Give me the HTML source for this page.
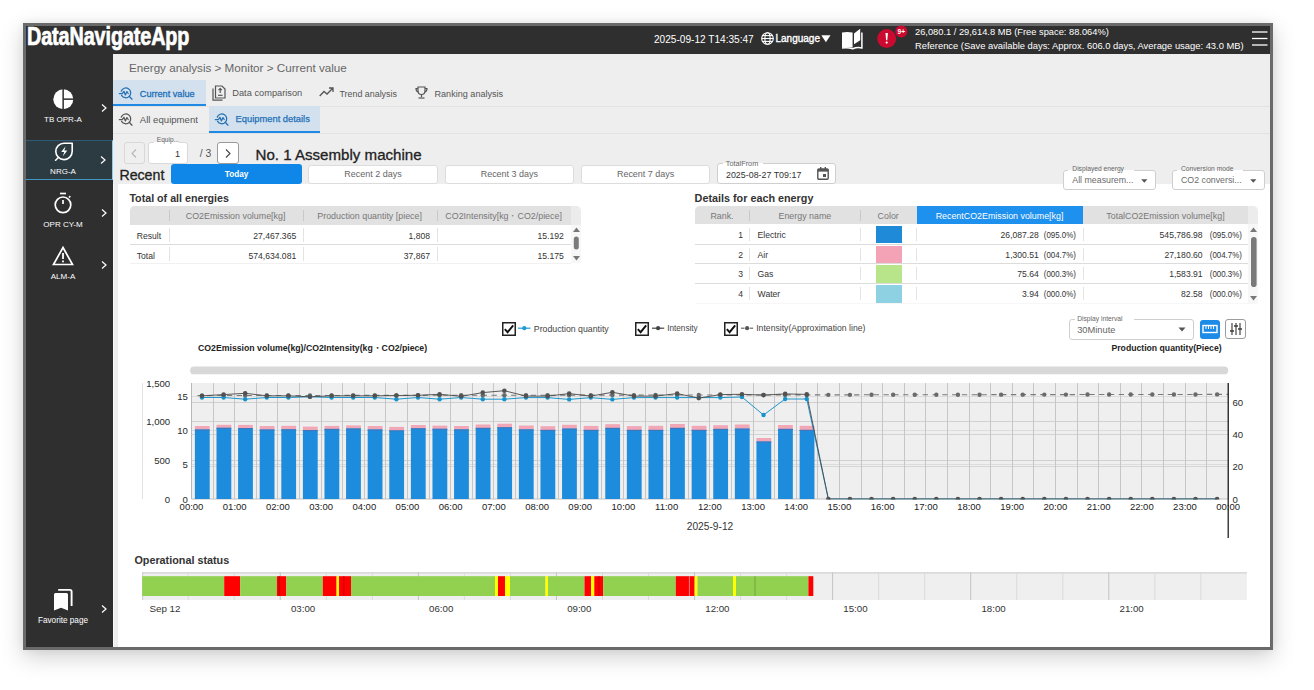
<!DOCTYPE html><html><head><meta charset="utf-8"><style>
html,body{margin:0;padding:0;}
body{width:1314px;height:690px;overflow:hidden;background:#fff;position:relative;font-family:"Liberation Sans", sans-serif;}
.t{position:absolute;white-space:nowrap;line-height:1.15;}
svg{position:absolute;overflow:visible;}
</style></head><body>
<div style="position:absolute;left:23px;top:23px;width:1250px;height:626.5px;box-sizing:border-box;border:3px solid #6a6a6a;box-shadow:0 7px 22px rgba(0,0,0,0.19), 0 0 8px rgba(0,0,0,0.06);background:#2f2f2f;"></div>
<div style="position:absolute;left:26px;top:26px;width:1244px;height:27.5px;background:#2f2f2f;"></div>
<div style="position:absolute;left:26px;top:53px;width:87px;height:593.5px;background:#2f2f2f;"></div>
<div style="position:absolute;left:113px;top:53.5px;width:1157px;height:593px;background:#eeeeee;"></div>
<div style="position:absolute;left:113px;top:184px;width:1px;height:462.5px;background:#fafafa;"></div>
<div style="position:absolute;left:118px;top:184px;width:1152px;height:462.5px;background:#fff;"></div>
<div class="t" style="left:26.6px;top:22.1px;font-size:25px;font-weight:bold;color:#fff;transform:scaleX(0.79);transform-origin:0 0;letter-spacing:-0.1px;-webkit-text-stroke:0.7px #fff;">DataNavigateApp</div>
<div class="t" style="left:654px;top:33.86px;font-size:10.1px;color:#fff;font-weight:normal;">2025-09-12 T14:35:47</div>
<svg style="left:761px;top:32px" width="13" height="13" viewBox="0 0 13 13"><g fill="none" stroke="#fff" stroke-width="1.1"><circle cx="6.5" cy="6.5" r="5.8"/><ellipse cx="6.5" cy="6.5" rx="2.6" ry="5.8"/><line x1="0.7" y1="6.5" x2="12.3" y2="6.5"/><line x1="1.5" y1="3.6" x2="11.5" y2="3.6"/><line x1="1.5" y1="9.4" x2="11.5" y2="9.4"/></g></svg>
<div class="t" style="left:775.5px;top:33.25px;font-size:10px;color:#fff;font-weight:normal;transform:scaleX(1.0);transform-origin:0 0;-webkit-text-stroke:0.35px #fff;">Language</div>
<svg style="left:820.6px;top:34.8px" width="10" height="8" viewBox="0 0 10 8"><path d="M0.3 0.3 L9.5 0.3 L4.9 7.3 Z" fill="#fff"/></svg>
<svg style="left:841px;top:28px" width="23" height="22" viewBox="0 0 23 22"><path d="M1 4.6 Q6.2 3.4 11.6 4.6 L11.6 19.6 Q6.2 18.6 1 19.8 Z" fill="#fff"/><path d="M13 5.6 L19.2 0.7 L19.2 12.3 L13 16.3 Z" fill="#fff"/><path d="M20.9 4.6 L20.9 19.9 Q16 18.9 11.8 20.7 Q6.5 19.1 1 20" fill="none" stroke="#fff" stroke-width="1.5"/></svg>
<svg style="left:876px;top:26px" width="32" height="24" viewBox="0 0 32 24"><circle cx="10.7" cy="12.6" r="9.5" fill="#cc0a2f"/><path d="M9.5 7 L11.9 7 L11.3 14.2 L10.1 14.2 Z" fill="#fff"/><circle cx="10.7" cy="16.6" r="1.1" fill="#fff"/><circle cx="25.3" cy="5.4" r="6" fill="#cc0a2f"/><text x="25.3" y="8.2" font-size="6.6" font-weight="bold" fill="#fff" text-anchor="middle" font-family="Liberation Sans">9+</text></svg>
<div class="t" style="left:915px;top:26.98px;font-size:9.3px;color:#fff;font-weight:normal;">26,080.1 / 29,614.8 MB (Free space: 88.064%)</div>
<div class="t" style="left:915px;top:41.09px;font-size:9.4px;color:#fff;font-weight:normal;">Reference (Save available days: Approx. 606.0 days, Average usage: 43.0 MB)</div>
<svg style="left:1252px;top:30px" width="16" height="16" viewBox="0 0 16 16"><g stroke="#fff" stroke-width="1.3"><line x1="0" y1="2" x2="15.5" y2="2"/><line x1="0" y1="8.5" x2="15.5" y2="8.5"/><line x1="0" y1="15" x2="15.5" y2="15"/></g></svg>
<div style="position:absolute;left:26px;top:140px;width:87px;height:40px;background:#2c3a42;box-sizing:border-box;border-top:1px solid #2d5a75;border-bottom:1.5px solid #4596c8;border-right:1px solid #8fcbea;"></div>
<svg style="left:53px;top:88.5px" width="21" height="21" viewBox="0 0 21 21"><circle cx="10.3" cy="10.2" r="10" fill="#fff"/><rect x="9.4" y="0" width="1.5" height="21" fill="#2f2f2f"/><rect x="10" y="9.4" width="11" height="1.5" fill="#2f2f2f"/></svg>
<div class="t" style="left:-437px;width:1000px;text-align:center;top:115.06px;font-size:8px;color:#fff;font-weight:normal;">TB OPR-A</div>
<svg style="left:100.5px;top:104px" width="6" height="8" viewBox="0 0 6 8"><path d="M1 0.5 L5 4 L1 7.5" fill="none" stroke="#fff" stroke-width="1.2"/></svg>
<svg style="left:53.5px;top:142px" width="20" height="20" viewBox="0 0 20 20"><path d="M18.2 1.2 L18.2 9.3 A8.2 8.2 0 1 1 10 1.2 Z" fill="none" stroke="#fff" stroke-width="1.6" stroke-linejoin="round"/><line x1="4.6" y1="15.2" x2="1.6" y2="18.2" stroke="#fff" stroke-width="1.6" stroke-linecap="round"/><path d="M11.6 4.3 L7.2 10.1 L10.2 10.1 L8.9 14.3 L13.3 8.5 L10.3 8.5 Z" fill="#fff"/></svg>
<div class="t" style="left:-437px;width:1000px;text-align:center;top:167.46px;font-size:8px;color:#fff;font-weight:normal;">NRG-A</div>
<svg style="left:100.2px;top:156.2px" width="6" height="8" viewBox="0 0 6 8"><path d="M1 0.5 L5 4 L1 7.5" fill="none" stroke="#fff" stroke-width="1.2"/></svg>
<svg style="left:53px;top:192px" width="20" height="22" viewBox="0 0 20 22"><g fill="none" stroke="#fff" stroke-width="1.7"><circle cx="10" cy="12.8" r="7.8"/><line x1="7" y1="1.5" x2="13" y2="1.5"/><line x1="10" y1="8" x2="10" y2="12"/><line x1="16" y1="5.5" x2="17.3" y2="4.2"/></g></svg>
<div class="t" style="left:-437px;width:1000px;text-align:center;top:219.66px;font-size:8px;color:#fff;font-weight:normal;">OPR CY-M</div>
<svg style="left:100.5px;top:208.5px" width="6" height="8" viewBox="0 0 6 8"><path d="M1 0.5 L5 4 L1 7.5" fill="none" stroke="#fff" stroke-width="1.2"/></svg>
<svg style="left:52px;top:246px" width="22" height="20" viewBox="0 0 22 20"><path d="M11 1.5 L20.5 18.5 L1.5 18.5 Z" fill="none" stroke="#fff" stroke-width="1.7" stroke-linejoin="miter"/><rect x="10.1" y="7" width="1.8" height="6" fill="#fff"/><rect x="10.1" y="14.5" width="1.8" height="1.8" fill="#fff"/></svg>
<div class="t" style="left:-437px;width:1000px;text-align:center;top:272.16px;font-size:8px;color:#fff;font-weight:normal;">ALM-A</div>
<svg style="left:100.5px;top:261px" width="6" height="8" viewBox="0 0 6 8"><path d="M1 0.5 L5 4 L1 7.5" fill="none" stroke="#fff" stroke-width="1.2"/></svg>
<svg style="left:53px;top:588px" width="20" height="24" viewBox="0 0 20 24"><path d="M5.2 1.9 L16.8 1.9 Q18.6 1.9 18.6 3.7 L18.6 18" fill="none" stroke="#fff" stroke-width="1.9"/><path d="M1 6.5 Q1 5 2.5 5 L13.5 5 Q15 5 15 6.5 L15 22.4 L8 19.8 L1 22.4 Z" fill="#fff"/></svg>
<div class="t" style="left:-437px;width:1000px;text-align:center;top:615.58px;font-size:8.2px;color:#fff;font-weight:normal;">Favorite page</div>
<svg style="left:100.5px;top:605px" width="6" height="8" viewBox="0 0 6 8"><path d="M1 0.5 L5 4 L1 7.5" fill="none" stroke="#fff" stroke-width="1.2"/></svg>
<div class="t" style="left:129.4px;top:62.23px;font-size:10.8px;color:#666;font-weight:normal;transform:scaleX(1.08);transform-origin:0 0;">Energy analysis &gt; Monitor &gt; Current value</div>
<div style="position:absolute;left:113px;top:106px;width:1157px;height:1px;background:#e2e2e2;"></div>
<div style="position:absolute;left:113px;top:133px;width:1157px;height:1px;background:#e2e2e2;"></div>
<div style="position:absolute;left:113px;top:80px;width:93px;height:24px;background:#d3e1ef;"></div>
<div style="position:absolute;left:113px;top:104px;width:93px;height:2px;background:#1f8ae3;"></div>
<div style="position:absolute;left:209px;top:106px;width:111px;height:25px;background:#d3e1ef;"></div>
<div style="position:absolute;left:209px;top:131px;width:111px;height:2px;background:#1f8ae3;"></div>
<svg style="left:118px;top:85.5px" width="16" height="15" viewBox="0 0 16 15"><g fill="none" stroke="#2470b2" stroke-width="1.25" stroke-linecap="round" stroke-linejoin="round"><path d="M3.2 5.2 A4.9 4.9 0 1 1 3.6 9.4"/><line x1="11.2" y1="10.3" x2="14" y2="13.2"/><path d="M1.3 7.6 L4.3 7.6 L5.9 5.3 L7.4 8.9 L8.9 5.6 L10.2 7.5"/></g></svg>
<div class="t" style="left:139.8px;top:88.54px;font-size:9.13px;color:#2270b8;font-weight:normal;-webkit-text-stroke:0.3px #2270b8;">Current value</div>
<svg style="left:212px;top:85px" width="14" height="16" viewBox="0 0 14 16"><g fill="none" stroke="#555" stroke-width="1.2"><path d="M3.5 1 L10 1 L13 4 L13 13 L3.5 13 Z"/><path d="M1 3.5 L1 15.2 L10.5 15.2"/><line x1="8.2" y1="3.5" x2="8.2" y2="8"/><path d="M6.5 5.2 L8.2 3.5 L9.9 5.2"/><line x1="6" y1="10.3" x2="10.5" y2="10.3"/></g></svg>
<div class="t" style="left:232.3px;top:88.42px;font-size:9.26px;color:#555;font-weight:normal;">Data comparison</div>
<svg style="left:319px;top:87px" width="15" height="10" viewBox="0 0 15 10"><path d="M0.7 9 L5 4.5 L8 7 L13.5 1.5 M10 1 L14 1 L14 5" fill="none" stroke="#555" stroke-width="1.3"/></svg>
<div class="t" style="left:339.5px;top:88.75px;font-size:8.89px;color:#555;font-weight:normal;">Trend analysis</div>
<svg style="left:415px;top:86px" width="13" height="13" viewBox="0 0 13 13"><g fill="none" stroke="#555" stroke-width="1.2"><path d="M3 1 L10 1 L10 5 A3.5 3.5 0 0 1 3 5 Z"/><path d="M3 2.5 L1 2.5 Q1 5.5 3.3 6"/><path d="M10 2.5 L12 2.5 Q12 5.5 9.7 6"/><line x1="6.5" y1="8.5" x2="6.5" y2="11"/><line x1="3.5" y1="12" x2="9.5" y2="12"/></g></svg>
<div class="t" style="left:434.5px;top:88.57px;font-size:9.09px;color:#555;font-weight:normal;">Ranking analysis</div>
<svg style="left:118px;top:111.5px" width="16" height="15" viewBox="0 0 16 15"><g fill="none" stroke="#555" stroke-width="1.25" stroke-linecap="round" stroke-linejoin="round"><path d="M3.2 5.2 A4.9 4.9 0 1 1 3.6 9.4"/><line x1="11.2" y1="10.3" x2="14" y2="13.2"/><path d="M1.3 7.6 L4.3 7.6 L5.9 5.3 L7.4 8.9 L8.9 5.6 L10.2 7.5"/></g></svg>
<div class="t" style="left:139.8px;top:114.00px;font-size:9.61px;color:#555;font-weight:normal;">All equipment</div>
<svg style="left:214px;top:111.5px" width="16" height="15" viewBox="0 0 16 15"><g fill="none" stroke="#2470b2" stroke-width="1.25" stroke-linecap="round" stroke-linejoin="round"><path d="M3.2 5.2 A4.9 4.9 0 1 1 3.6 9.4"/><line x1="11.2" y1="10.3" x2="14" y2="13.2"/><path d="M1.3 7.6 L4.3 7.6 L5.9 5.3 L7.4 8.9 L8.9 5.6 L10.2 7.5"/></g></svg>
<div class="t" style="left:235.6px;top:114.23px;font-size:9.36px;color:#2270b8;font-weight:normal;-webkit-text-stroke:0.25px #2270b8;">Equipment details</div>
<div style="position:absolute;left:123.7px;top:142.3px;width:21px;height:21.4px;box-sizing:border-box;background:#efefef;border:1px solid #d8d8d8;border-radius:3px;"></div>
<svg style="left:131px;top:148.5px" width="6" height="9" viewBox="0 0 6 9"><path d="M5 0.5 L1 4.5 L5 8.5" fill="none" stroke="#b5b5b5" stroke-width="1.1"/></svg>
<div style="position:absolute;left:147.7px;top:142.3px;width:40.6px;height:21.4px;box-sizing:border-box;background:#fff;border:1px solid #d9d9d9;border-radius:3px;"></div>
<div style="position:absolute;left:154px;top:139px;width:25px;height:5px;background:#eeeeee;"></div>
<div style="position:absolute;left:154px;top:142px;width:25px;height:2px;background:#fff;"></div>
<div class="t" style="left:156.8px;top:136.03px;font-size:6.6px;color:#666;font-weight:normal;">Equip...</div>
<div class="t" style="right:1134px;top:148.67px;font-size:9.2px;color:#333;font-weight:normal;">1</div>
<div class="t" style="left:199.8px;top:147.89px;font-size:10.4px;color:#555;font-weight:normal;">/ 3</div>
<div style="position:absolute;left:217.4px;top:142.3px;width:21.2px;height:21.4px;box-sizing:border-box;background:#fff;border:1px solid #9a9a9a;border-radius:3px;"></div>
<svg style="left:225px;top:148.5px" width="6" height="9" viewBox="0 0 6 9"><path d="M1 0.5 L5 4.5 L1 8.5" fill="none" stroke="#444" stroke-width="1.1"/></svg>
<div class="t" style="left:255.5px;top:146.03px;font-size:15.1px;color:#222;font-weight:normal;-webkit-text-stroke:0.3px #222;">No. 1 Assembly machine</div>
<div class="t" style="left:119.4px;top:166.65px;font-size:14.2px;color:#222;font-weight:normal;-webkit-text-stroke:0.3px #222;">Recent</div>
<div style="position:absolute;left:171.1px;top:163.7px;width:130.9px;height:20.3px;background:#0f87e8;border-radius:3px;"></div>
<div class="t" style="left:-263.4px;width:1000px;text-align:center;top:170.08px;font-size:8.2px;color:#fff;font-weight:bold;">Today</div>
<div style="position:absolute;left:308.2px;top:164.5px;width:129.5px;height:19.1px;box-sizing:border-box;background:#fff;border:1px solid #dcdcdc;border-radius:3px;"></div>
<div class="t" style="left:-127.05000000000001px;width:1000px;text-align:center;top:169.18px;font-size:8.97px;color:#666;font-weight:normal;">Recent 2 days</div>
<div style="position:absolute;left:444.7px;top:164.5px;width:129.3px;height:19.1px;box-sizing:border-box;background:#fff;border:1px solid #dcdcdc;border-radius:3px;"></div>
<div class="t" style="left:9.350000000000023px;width:1000px;text-align:center;top:169.18px;font-size:8.97px;color:#666;font-weight:normal;">Recent 3 days</div>
<div style="position:absolute;left:580.8px;top:164.5px;width:129.60000000000002px;height:19.1px;box-sizing:border-box;background:#fff;border:1px solid #dcdcdc;border-radius:3px;"></div>
<div class="t" style="left:145.5999999999999px;width:1000px;text-align:center;top:169.18px;font-size:8.97px;color:#666;font-weight:normal;">Recent 7 days</div>
<div style="position:absolute;left:716.7px;top:163.4px;width:119.7px;height:20.8px;box-sizing:border-box;background:#fff;border:1px solid #cfcfcf;border-radius:3px;"></div>
<div style="position:absolute;left:723px;top:160px;width:40px;height:5px;background:#eeeeee;"></div>
<div style="position:absolute;left:723px;top:163.4px;width:40px;height:1.5px;background:#fff;"></div>
<div class="t" style="left:725.8px;top:160.19px;font-size:7.3px;color:#666;font-weight:normal;">TotalFrom</div>
<div class="t" style="left:726px;top:170.16px;font-size:8.88px;color:#333;font-weight:normal;">2025-08-27 T09:17</div>
<svg style="left:817px;top:167px" width="12" height="13" viewBox="0 0 12 13"><rect x="0.8" y="2" width="10.4" height="10.2" rx="1" fill="none" stroke="#555" stroke-width="1.4"/><rect x="0.8" y="2" width="10.4" height="2.6" fill="#555"/><rect x="3" y="0" width="1.4" height="3" fill="#555"/><rect x="7.6" y="0" width="1.4" height="3" fill="#555"/><rect x="6" y="7" width="3" height="3" fill="#555"/></svg>
<div style="position:absolute;left:1063.3px;top:169.6px;width:92.40000000000009px;height:20.900000000000006px;box-sizing:border-box;background:#fff;border:1px solid #cfcfcf;border-radius:3px;"></div>
<div style="position:absolute;left:1068.3px;top:165.6px;width:66px;height:5px;background:#eeeeee;"></div>
<div style="position:absolute;left:1068.3px;top:169.6px;width:66px;height:1.5px;background:#fff;"></div>
<div class="t" style="left:1072.3px;top:164.84px;font-size:6.7px;color:#666;font-weight:normal;">Displayed energy</div>
<div class="t" style="left:1072.3px;top:174.74px;font-size:8.8px;color:#6a6a6a;font-weight:normal;">All measurem...</div>
<svg style="left:1140.7px;top:178.55px" width="7" height="4" viewBox="0 0 7 4"><path d="M0.2 0.2 L6.4 0.2 L3.3 3.8 Z" fill="#555"/></svg>
<div style="position:absolute;left:1172px;top:169.6px;width:92.79999999999995px;height:20.900000000000006px;box-sizing:border-box;background:#fff;border:1px solid #cfcfcf;border-radius:3px;"></div>
<div style="position:absolute;left:1177px;top:165.6px;width:66px;height:5px;background:#eeeeee;"></div>
<div style="position:absolute;left:1177px;top:169.6px;width:66px;height:1.5px;background:#fff;"></div>
<div class="t" style="left:1181px;top:164.84px;font-size:6.7px;color:#666;font-weight:normal;">Conversion mode</div>
<div class="t" style="left:1181px;top:174.74px;font-size:8.8px;color:#6a6a6a;font-weight:normal;">CO2 conversi...</div>
<svg style="left:1249.8px;top:178.55px" width="7" height="4" viewBox="0 0 7 4"><path d="M0.2 0.2 L6.4 0.2 L3.3 3.8 Z" fill="#555"/></svg>
<div class="t" style="left:129.4px;top:191.62px;font-size:10.7px;color:#333;font-weight:bold;font-weight:600;">Total of all energies</div>
<div style="position:absolute;left:129.7px;top:205.9px;width:451.3px;height:57.5px;background:#f7f7f7;border-radius:5px 5px 2px 2px;"></div>
<div style="position:absolute;left:129.7px;top:205.9px;width:451.3px;height:18.9px;background:#ececec;border-radius:5px 5px 0 0;"></div>
<div style="position:absolute;left:129.7px;top:224.8px;width:441px;height:38.6px;background:#fff;"></div>
<div style="position:absolute;left:129.7px;top:205.9px;width:441px;height:18.9px;background:#e1e1e1;border-radius:5px 0 0 0;"></div>
<div style="position:absolute;left:168.5px;top:210px;width:1px;height:11px;background:#c9c9c9;"></div>
<div style="position:absolute;left:302.6px;top:210px;width:1px;height:11px;background:#c9c9c9;"></div>
<div style="position:absolute;left:436.6px;top:210px;width:1px;height:11px;background:#c9c9c9;"></div>
<div class="t" style="left:-264.45px;width:1000px;text-align:center;top:211.15px;font-size:8.9px;color:#777;font-weight:normal;">CO2Emission volume[kg]</div>
<div class="t" style="left:-130.39999999999998px;width:1000px;text-align:center;top:211.15px;font-size:8.9px;color:#777;font-weight:normal;">Production quantity [piece]</div>
<div class="t" style="left:3.650000000000034px;width:1000px;text-align:center;top:211.15px;font-size:8.9px;color:#777;font-weight:normal;">CO2Intensity[kg・CO2/piece]</div>
<div style="position:absolute;left:129.7px;top:244px;width:441px;height:1px;background:#dcdcdc;"></div>
<div style="position:absolute;left:129.7px;top:262.8px;width:441px;height:1px;background:#f1f1f1;"></div>
<div style="position:absolute;left:168.5px;top:227.5px;width:1px;height:14px;background:#e3e3e3;"></div>
<div style="position:absolute;left:302.6px;top:227.5px;width:1px;height:14px;background:#e3e3e3;"></div>
<div style="position:absolute;left:436.6px;top:227.5px;width:1px;height:14px;background:#e3e3e3;"></div>
<div style="position:absolute;left:168.5px;top:247px;width:1px;height:14px;background:#e3e3e3;"></div>
<div style="position:absolute;left:302.6px;top:247px;width:1px;height:14px;background:#e3e3e3;"></div>
<div style="position:absolute;left:436.6px;top:247px;width:1px;height:14px;background:#e3e3e3;"></div>
<div class="t" style="left:136.7px;top:232.02px;font-size:8.6px;color:#333;font-weight:normal;">Result</div>
<div class="t" style="left:136.7px;top:251.52px;font-size:8.6px;color:#333;font-weight:normal;">Total</div>
<div class="t" style="right:1017.8px;top:232.02px;font-size:8.6px;color:#333;font-weight:normal;">27,467.365</div>
<div class="t" style="right:884px;top:232.02px;font-size:8.6px;color:#333;font-weight:normal;">1,808</div>
<div class="t" style="right:750.2px;top:232.02px;font-size:8.6px;color:#333;font-weight:normal;">15.192</div>
<div class="t" style="right:1017.8px;top:251.52px;font-size:8.6px;color:#333;font-weight:normal;">574,634.081</div>
<div class="t" style="right:884px;top:251.52px;font-size:8.6px;color:#333;font-weight:normal;">37,867</div>
<div class="t" style="right:750.2px;top:251.52px;font-size:8.6px;color:#333;font-weight:normal;">15.175</div>
<svg style="left:572px;top:226px" width="9" height="36" viewBox="0 0 9 36"><path d="M4.5 1.5 L8 6 L1 6 Z" fill="#777"/><rect x="1.8" y="10.5" width="5" height="13" rx="2.5" fill="#7a7a7a"/><path d="M4.5 34.5 L8 30 L1 30 Z" fill="#777"/></svg>
<div class="t" style="left:694.6px;top:192.03px;font-size:10.8px;color:#333;font-weight:bold;font-weight:600;">Details for each energy</div>
<div style="position:absolute;left:694.6px;top:206px;width:563.9px;height:97.5px;background:#f7f7f7;border-radius:5px 5px 2px 2px;"></div>
<div style="position:absolute;left:694.6px;top:206px;width:563.9px;height:18.3px;background:#ececec;border-radius:5px 5px 0 0;"></div>
<div style="position:absolute;left:694.6px;top:224.3px;width:553.8px;height:79.2px;background:#fff;"></div>
<div style="position:absolute;left:694.6px;top:206px;width:553.8px;height:18.3px;background:#e1e1e1;border-radius:5px 0 0 0;"></div>
<div style="position:absolute;left:916.5px;top:205.5px;width:166.1px;height:18.8px;background:#1e90ee;"></div>
<div style="position:absolute;left:749.4px;top:210px;width:1px;height:11px;background:#c9c9c9;"></div>
<div style="position:absolute;left:860.4px;top:210px;width:1px;height:11px;background:#c9c9c9;"></div>
<div class="t" style="left:222.0px;width:1000px;text-align:center;top:210.95px;font-size:8.9px;color:#777;font-weight:normal;">Rank.</div>
<div class="t" style="left:304.9px;width:1000px;text-align:center;top:210.95px;font-size:8.9px;color:#777;font-weight:normal;">Energy name</div>
<div class="t" style="left:388.20000000000005px;width:1000px;text-align:center;top:210.95px;font-size:8.9px;color:#777;font-weight:normal;">Color</div>
<div class="t" style="left:499.54999999999995px;width:1000px;text-align:center;top:210.95px;font-size:8.9px;color:#fff;font-weight:normal;">RecentCO2Emission volume[kg]</div>
<div class="t" style="left:665.5px;width:1000px;text-align:center;top:210.95px;font-size:8.9px;color:#777;font-weight:normal;">TotalCO2Emission volume[kg]</div>
<div style="position:absolute;left:694.6px;top:243.5px;width:553.8px;height:1px;background:#dcdcdc;"></div>
<div style="position:absolute;left:749.4px;top:227.8px;width:1px;height:13px;background:#e3e3e3;"></div>
<div style="position:absolute;left:860.4px;top:227.8px;width:1px;height:13px;background:#e3e3e3;"></div>
<div style="position:absolute;left:916px;top:227.8px;width:1px;height:13px;background:#e3e3e3;"></div>
<div style="position:absolute;left:1082.6px;top:227.8px;width:1px;height:13px;background:#e3e3e3;"></div>
<div class="t" style="right:571px;top:230.82px;font-size:8.6px;color:#333;font-weight:normal;">1</div>
<div class="t" style="left:757.6px;top:230.82px;font-size:8.6px;color:#333;font-weight:normal;">Electric</div>
<div style="position:absolute;left:876.3px;top:225.8px;width:25.6px;height:17.7px;background:#1e8ad8;"></div>
<div class="t" style="right:275.20000000000005px;top:230.82px;font-size:8.6px;color:#333;font-weight:normal;">26,087.28</div>
<div class="t" style="right:238.20000000000005px;top:230.82px;font-size:8.6px;color:#333;font-weight:normal;transform:scaleX(0.92);transform-origin:100% 0;">(095.0%)</div>
<div class="t" style="right:111.40000000000009px;top:230.82px;font-size:8.6px;color:#333;font-weight:normal;">545,786.98</div>
<div class="t" style="right:71.70000000000005px;top:230.82px;font-size:8.6px;color:#333;font-weight:normal;transform:scaleX(0.92);transform-origin:100% 0;">(095.0%)</div>
<div style="position:absolute;left:694.6px;top:263.2px;width:553.8px;height:1px;background:#dcdcdc;"></div>
<div style="position:absolute;left:749.4px;top:247.5px;width:1px;height:13px;background:#e3e3e3;"></div>
<div style="position:absolute;left:860.4px;top:247.5px;width:1px;height:13px;background:#e3e3e3;"></div>
<div style="position:absolute;left:916px;top:247.5px;width:1px;height:13px;background:#e3e3e3;"></div>
<div style="position:absolute;left:1082.6px;top:247.5px;width:1px;height:13px;background:#e3e3e3;"></div>
<div class="t" style="right:571px;top:250.52px;font-size:8.6px;color:#333;font-weight:normal;">2</div>
<div class="t" style="left:757.6px;top:250.52px;font-size:8.6px;color:#333;font-weight:normal;">Air</div>
<div style="position:absolute;left:876.3px;top:245.5px;width:25.6px;height:17.7px;background:#f3a3b5;"></div>
<div class="t" style="right:275.20000000000005px;top:250.52px;font-size:8.6px;color:#333;font-weight:normal;">1,300.51</div>
<div class="t" style="right:238.20000000000005px;top:250.52px;font-size:8.6px;color:#333;font-weight:normal;transform:scaleX(0.92);transform-origin:100% 0;">(004.7%)</div>
<div class="t" style="right:111.40000000000009px;top:250.52px;font-size:8.6px;color:#333;font-weight:normal;">27,180.60</div>
<div class="t" style="right:71.70000000000005px;top:250.52px;font-size:8.6px;color:#333;font-weight:normal;transform:scaleX(0.92);transform-origin:100% 0;">(004.7%)</div>
<div style="position:absolute;left:694.6px;top:282.9px;width:553.8px;height:1px;background:#dcdcdc;"></div>
<div style="position:absolute;left:749.4px;top:267.2px;width:1px;height:13px;background:#e3e3e3;"></div>
<div style="position:absolute;left:860.4px;top:267.2px;width:1px;height:13px;background:#e3e3e3;"></div>
<div style="position:absolute;left:916px;top:267.2px;width:1px;height:13px;background:#e3e3e3;"></div>
<div style="position:absolute;left:1082.6px;top:267.2px;width:1px;height:13px;background:#e3e3e3;"></div>
<div class="t" style="right:571px;top:270.22px;font-size:8.6px;color:#333;font-weight:normal;">3</div>
<div class="t" style="left:757.6px;top:270.22px;font-size:8.6px;color:#333;font-weight:normal;">Gas</div>
<div style="position:absolute;left:876.3px;top:265.2px;width:25.6px;height:17.7px;background:#b9e58a;"></div>
<div class="t" style="right:275.20000000000005px;top:270.22px;font-size:8.6px;color:#333;font-weight:normal;">75.64</div>
<div class="t" style="right:238.20000000000005px;top:270.22px;font-size:8.6px;color:#333;font-weight:normal;transform:scaleX(0.92);transform-origin:100% 0;">(000.3%)</div>
<div class="t" style="right:111.40000000000009px;top:270.22px;font-size:8.6px;color:#333;font-weight:normal;">1,583.91</div>
<div class="t" style="right:71.70000000000005px;top:270.22px;font-size:8.6px;color:#333;font-weight:normal;transform:scaleX(0.92);transform-origin:100% 0;">(000.3%)</div>
<div style="position:absolute;left:749.4px;top:286.9px;width:1px;height:13px;background:#e3e3e3;"></div>
<div style="position:absolute;left:860.4px;top:286.9px;width:1px;height:13px;background:#e3e3e3;"></div>
<div style="position:absolute;left:916px;top:286.9px;width:1px;height:13px;background:#e3e3e3;"></div>
<div style="position:absolute;left:1082.6px;top:286.9px;width:1px;height:13px;background:#e3e3e3;"></div>
<div class="t" style="right:571px;top:289.92px;font-size:8.6px;color:#333;font-weight:normal;">4</div>
<div class="t" style="left:757.6px;top:289.92px;font-size:8.6px;color:#333;font-weight:normal;">Water</div>
<div style="position:absolute;left:876.3px;top:284.9px;width:25.6px;height:17.7px;background:#8dd1e2;"></div>
<div class="t" style="right:275.20000000000005px;top:289.92px;font-size:8.6px;color:#333;font-weight:normal;">3.94</div>
<div class="t" style="right:238.20000000000005px;top:289.92px;font-size:8.6px;color:#333;font-weight:normal;transform:scaleX(0.92);transform-origin:100% 0;">(000.0%)</div>
<div class="t" style="right:111.40000000000009px;top:289.92px;font-size:8.6px;color:#333;font-weight:normal;">82.58</div>
<div class="t" style="right:71.70000000000005px;top:289.92px;font-size:8.6px;color:#333;font-weight:normal;transform:scaleX(0.92);transform-origin:100% 0;">(000.0%)</div>
<svg style="left:1249px;top:226px" width="9" height="76" viewBox="0 0 9 76"><path d="M4.5 1.5 L8 6 L1 6 Z" fill="#777"/><rect x="2" y="11" width="5.6" height="50" rx="2.8" fill="#7a7a7a"/><path d="M4.5 74.5 L8 70 L1 70 Z" fill="#777"/></svg>
<svg style="left:501.8px;top:321.8px" width="14" height="14" viewBox="0 0 14 14"><rect x="0.75" y="0.75" width="12.5" height="12.5" fill="#fff" stroke="#222" stroke-width="1.5"/><path d="M2.8 7.2 L5.6 10.2 L11.2 3.3" fill="none" stroke="#111" stroke-width="1.9"/></svg>
<svg style="left:518px;top:325px" width="14" height="6" viewBox="0 0 14 6"><line x1="0" y1="3.2" x2="12.5" y2="3.2" stroke="#1e9bd7" stroke-width="1.2"/><circle cx="6.3" cy="3.2" r="2.1" fill="#1e9bd7"/></svg>
<div class="t" style="left:533.8px;top:323.68px;font-size:8.75px;color:#444;font-weight:normal;">Production quantity</div>
<svg style="left:635.2px;top:321.8px" width="14" height="14" viewBox="0 0 14 14"><rect x="0.75" y="0.75" width="12.5" height="12.5" fill="#fff" stroke="#222" stroke-width="1.5"/><path d="M2.8 7.2 L5.6 10.2 L11.2 3.3" fill="none" stroke="#111" stroke-width="1.9"/></svg>
<svg style="left:651.5px;top:325px" width="14" height="6" viewBox="0 0 14 6"><line x1="0" y1="3.2" x2="12.2" y2="3.2" stroke="#444" stroke-width="1.2"/><circle cx="6.1" cy="3.2" r="2.1" fill="#444"/></svg>
<div class="t" style="left:667.2px;top:324.18px;font-size:8.2px;color:#444;font-weight:normal;">Intensity</div>
<svg style="left:724.2px;top:321.8px" width="14" height="14" viewBox="0 0 14 14"><rect x="0.75" y="0.75" width="12.5" height="12.5" fill="#fff" stroke="#222" stroke-width="1.5"/><path d="M2.8 7.2 L5.6 10.2 L11.2 3.3" fill="none" stroke="#111" stroke-width="1.9"/></svg>
<svg style="left:740.5px;top:325px" width="14" height="6" viewBox="0 0 14 6"><line x1="0" y1="3.2" x2="3.5" y2="3.2" stroke="#666" stroke-width="1.2"/><line x1="8.8" y1="3.2" x2="12.2" y2="3.2" stroke="#666" stroke-width="1.2"/><circle cx="6.1" cy="3.2" r="2.1" fill="#555"/></svg>
<div class="t" style="left:756.2px;top:323.76px;font-size:8.66px;color:#444;font-weight:normal;">Intensity(Approximation line)</div>
<div class="t" style="left:198.2px;top:342.79px;font-size:8.85px;color:#222;font-weight:bold;transform:scaleX(0.985);transform-origin:0 0;">CO2Emission volume(kg)/CO2Intensity(kg・CO2/piece)</div>
<div class="t" style="right:92.40000000000009px;top:344.05px;font-size:8.67px;color:#222;font-weight:bold;">Production quantity(Piece)</div>
<div style="position:absolute;left:1068.5px;top:319.1px;width:125.3px;height:20.8px;box-sizing:border-box;background:#fff;border:1px solid #cfcfcf;border-radius:3px;"></div>
<div style="position:absolute;left:1074.5px;top:315px;width:59px;height:5px;background:#fff;"></div>
<div class="t" style="left:1077.2px;top:314.74px;font-size:6.7px;color:#666;font-weight:normal;">Display interval</div>
<div class="t" style="left:1077.2px;top:325.18px;font-size:9.3px;color:#666;font-weight:normal;">30Minute</div>
<svg style="left:1177.5px;top:327px" width="8" height="5" viewBox="0 0 8 5"><path d="M0.5 0.5 L7.5 0.5 L4 4.5 Z" fill="#555"/></svg>
<div style="position:absolute;left:1200px;top:319.8px;width:19.8px;height:19.2px;background:#1c8be8;border-radius:3px;"></div>
<svg style="left:1202px;top:324px" width="16" height="10" viewBox="0 0 16 10"><rect x="1" y="1.5" width="14" height="7" fill="none" stroke="#fff" stroke-width="1.4"/><g stroke="#fff" stroke-width="1"><line x1="4" y1="2" x2="4" y2="5"/><line x1="6.5" y1="2" x2="6.5" y2="5"/><line x1="9" y1="2" x2="9" y2="5"/><line x1="11.5" y1="2" x2="11.5" y2="5"/></g></svg>
<div style="position:absolute;left:1225.4px;top:319.1px;width:20.9px;height:20.2px;box-sizing:border-box;background:#fff;border:1px solid #9c9c9c;border-radius:3px;"></div>
<svg style="left:1229px;top:322px" width="14" height="14" viewBox="0 0 14 14"><g stroke="#444" stroke-width="1.2"><line x1="3" y1="1" x2="3" y2="13"/><line x1="7" y1="1" x2="7" y2="13"/><line x1="11" y1="1" x2="11" y2="13"/><line x1="1" y1="9" x2="5" y2="9" stroke-width="1.6"/><line x1="5" y1="4" x2="9" y2="4" stroke-width="1.6"/><line x1="9" y1="7" x2="13" y2="7" stroke-width="1.6"/></g></svg>
<svg style="left:0;top:0" width="1314" height="690" viewBox="0 0 1314 690"><rect x="190.1" y="366.5" width="1038.1000000000001" height="7.8" rx="3.9" fill="#d8d8d8"/><rect x="191.5" y="383.0" width="1036.7" height="116.0" fill="#efefef"/><line x1="142.5" y1="383.0" x2="142.5" y2="499.0" stroke="#e2e2e2" stroke-width="1"/><line x1="191.5" y1="396.5" x2="1228.2" y2="396.5" stroke="#dcdcdc" stroke-width="1"/><line x1="191.5" y1="402.5" x2="1228.2" y2="402.5" stroke="#cfcfcf" stroke-width="1"/><line x1="191.5" y1="421.5" x2="1228.2" y2="421.5" stroke="#d0d0d0" stroke-width="1"/><line x1="191.5" y1="430.5" x2="1228.2" y2="430.5" stroke="#dcdcdc" stroke-width="1"/><line x1="191.5" y1="434.5" x2="1228.2" y2="434.5" stroke="#d3d3d3" stroke-width="1"/><line x1="191.5" y1="460.5" x2="1228.2" y2="460.5" stroke="#d0d0d0" stroke-width="1"/><line x1="191.5" y1="464.5" x2="1228.2" y2="464.5" stroke="#dcdcdc" stroke-width="1"/><line x1="191.5" y1="466.5" x2="1228.2" y2="466.5" stroke="#d6d6d6" stroke-width="1"/><line x1="191.50" y1="383.0" x2="191.50" y2="499.0" stroke="#c6c6c6" stroke-width="1"/><line x1="213.50" y1="383.0" x2="213.50" y2="499.0" stroke="#c6c6c6" stroke-width="1"/><line x1="234.50" y1="383.0" x2="234.50" y2="499.0" stroke="#c6c6c6" stroke-width="1"/><line x1="256.50" y1="383.0" x2="256.50" y2="499.0" stroke="#c6c6c6" stroke-width="1"/><line x1="277.50" y1="383.0" x2="277.50" y2="499.0" stroke="#c6c6c6" stroke-width="1"/><line x1="299.50" y1="383.0" x2="299.50" y2="499.0" stroke="#c6c6c6" stroke-width="1"/><line x1="321.50" y1="383.0" x2="321.50" y2="499.0" stroke="#c6c6c6" stroke-width="1"/><line x1="342.50" y1="383.0" x2="342.50" y2="499.0" stroke="#c6c6c6" stroke-width="1"/><line x1="364.50" y1="383.0" x2="364.50" y2="499.0" stroke="#c6c6c6" stroke-width="1"/><line x1="385.50" y1="383.0" x2="385.50" y2="499.0" stroke="#c6c6c6" stroke-width="1"/><line x1="407.50" y1="383.0" x2="407.50" y2="499.0" stroke="#c6c6c6" stroke-width="1"/><line x1="429.50" y1="383.0" x2="429.50" y2="499.0" stroke="#c6c6c6" stroke-width="1"/><line x1="450.50" y1="383.0" x2="450.50" y2="499.0" stroke="#c6c6c6" stroke-width="1"/><line x1="472.50" y1="383.0" x2="472.50" y2="499.0" stroke="#c6c6c6" stroke-width="1"/><line x1="493.50" y1="383.0" x2="493.50" y2="499.0" stroke="#c6c6c6" stroke-width="1"/><line x1="515.50" y1="383.0" x2="515.50" y2="499.0" stroke="#c6c6c6" stroke-width="1"/><line x1="537.50" y1="383.0" x2="537.50" y2="499.0" stroke="#c6c6c6" stroke-width="1"/><line x1="558.50" y1="383.0" x2="558.50" y2="499.0" stroke="#c6c6c6" stroke-width="1"/><line x1="580.50" y1="383.0" x2="580.50" y2="499.0" stroke="#c6c6c6" stroke-width="1"/><line x1="601.50" y1="383.0" x2="601.50" y2="499.0" stroke="#c6c6c6" stroke-width="1"/><line x1="623.50" y1="383.0" x2="623.50" y2="499.0" stroke="#c6c6c6" stroke-width="1"/><line x1="645.50" y1="383.0" x2="645.50" y2="499.0" stroke="#c6c6c6" stroke-width="1"/><line x1="666.50" y1="383.0" x2="666.50" y2="499.0" stroke="#c6c6c6" stroke-width="1"/><line x1="688.50" y1="383.0" x2="688.50" y2="499.0" stroke="#c6c6c6" stroke-width="1"/><line x1="709.50" y1="383.0" x2="709.50" y2="499.0" stroke="#c6c6c6" stroke-width="1"/><line x1="731.50" y1="383.0" x2="731.50" y2="499.0" stroke="#c6c6c6" stroke-width="1"/><line x1="753.50" y1="383.0" x2="753.50" y2="499.0" stroke="#c6c6c6" stroke-width="1"/><line x1="774.50" y1="383.0" x2="774.50" y2="499.0" stroke="#c6c6c6" stroke-width="1"/><line x1="796.50" y1="383.0" x2="796.50" y2="499.0" stroke="#c6c6c6" stroke-width="1"/><line x1="817.50" y1="383.0" x2="817.50" y2="499.0" stroke="#c6c6c6" stroke-width="1"/><line x1="839.50" y1="383.0" x2="839.50" y2="499.0" stroke="#c6c6c6" stroke-width="1"/><line x1="861.50" y1="383.0" x2="861.50" y2="499.0" stroke="#c6c6c6" stroke-width="1"/><line x1="882.50" y1="383.0" x2="882.50" y2="499.0" stroke="#c6c6c6" stroke-width="1"/><line x1="904.50" y1="383.0" x2="904.50" y2="499.0" stroke="#c6c6c6" stroke-width="1"/><line x1="925.50" y1="383.0" x2="925.50" y2="499.0" stroke="#c6c6c6" stroke-width="1"/><line x1="947.50" y1="383.0" x2="947.50" y2="499.0" stroke="#c6c6c6" stroke-width="1"/><line x1="969.50" y1="383.0" x2="969.50" y2="499.0" stroke="#c6c6c6" stroke-width="1"/><line x1="990.50" y1="383.0" x2="990.50" y2="499.0" stroke="#c6c6c6" stroke-width="1"/><line x1="1012.50" y1="383.0" x2="1012.50" y2="499.0" stroke="#c6c6c6" stroke-width="1"/><line x1="1033.50" y1="383.0" x2="1033.50" y2="499.0" stroke="#c6c6c6" stroke-width="1"/><line x1="1055.50" y1="383.0" x2="1055.50" y2="499.0" stroke="#c6c6c6" stroke-width="1"/><line x1="1077.50" y1="383.0" x2="1077.50" y2="499.0" stroke="#c6c6c6" stroke-width="1"/><line x1="1098.50" y1="383.0" x2="1098.50" y2="499.0" stroke="#c6c6c6" stroke-width="1"/><line x1="1120.50" y1="383.0" x2="1120.50" y2="499.0" stroke="#c6c6c6" stroke-width="1"/><line x1="1141.50" y1="383.0" x2="1141.50" y2="499.0" stroke="#c6c6c6" stroke-width="1"/><line x1="1163.50" y1="383.0" x2="1163.50" y2="499.0" stroke="#c6c6c6" stroke-width="1"/><line x1="1185.50" y1="383.0" x2="1185.50" y2="499.0" stroke="#c6c6c6" stroke-width="1"/><line x1="1206.50" y1="383.0" x2="1206.50" y2="499.0" stroke="#c6c6c6" stroke-width="1"/><line x1="1228.50" y1="383.0" x2="1228.50" y2="499.0" stroke="#c6c6c6" stroke-width="1"/><line x1="191.5" y1="383.0" x2="191.5" y2="499.0" stroke="#b8b8b8" stroke-width="1"/><line x1="191.5" y1="499.0" x2="1228.2" y2="499.0" stroke="#c0c0c0" stroke-width="1"/><rect x="194.90" y="426" width="14.8" height="3.60" fill="#f2a7b6"/><rect x="194.90" y="429.6" width="14.8" height="69.40" fill="#1e8cdc"/><rect x="194.90" y="429.40" width="14.8" height="1.2" fill="#3d78bf"/><rect x="216.50" y="424.8" width="14.8" height="3.10" fill="#f2a7b6"/><rect x="216.50" y="427.9" width="14.8" height="71.10" fill="#1e8cdc"/><rect x="216.50" y="427.70" width="14.8" height="1.2" fill="#3d78bf"/><rect x="238.09" y="424.9" width="14.8" height="3.30" fill="#f2a7b6"/><rect x="238.09" y="428.2" width="14.8" height="70.80" fill="#1e8cdc"/><rect x="238.09" y="428.00" width="14.8" height="1.2" fill="#3d78bf"/><rect x="259.69" y="426" width="14.8" height="3.60" fill="#f2a7b6"/><rect x="259.69" y="429.6" width="14.8" height="69.40" fill="#1e8cdc"/><rect x="259.69" y="429.40" width="14.8" height="1.2" fill="#3d78bf"/><rect x="281.29" y="425.8" width="14.8" height="3.60" fill="#f2a7b6"/><rect x="281.29" y="429.4" width="14.8" height="69.60" fill="#1e8cdc"/><rect x="281.29" y="429.20" width="14.8" height="1.2" fill="#3d78bf"/><rect x="302.89" y="426.6" width="14.8" height="3.60" fill="#f2a7b6"/><rect x="302.89" y="430.2" width="14.8" height="68.80" fill="#1e8cdc"/><rect x="302.89" y="430.00" width="14.8" height="1.2" fill="#3d78bf"/><rect x="324.49" y="425.9" width="14.8" height="3.10" fill="#f2a7b6"/><rect x="324.49" y="429" width="14.8" height="70.00" fill="#1e8cdc"/><rect x="324.49" y="428.80" width="14.8" height="1.2" fill="#3d78bf"/><rect x="346.08" y="425.4" width="14.8" height="3.20" fill="#f2a7b6"/><rect x="346.08" y="428.6" width="14.8" height="70.40" fill="#1e8cdc"/><rect x="346.08" y="428.40" width="14.8" height="1.2" fill="#3d78bf"/><rect x="367.68" y="426" width="14.8" height="3.60" fill="#f2a7b6"/><rect x="367.68" y="429.6" width="14.8" height="69.40" fill="#1e8cdc"/><rect x="367.68" y="429.40" width="14.8" height="1.2" fill="#3d78bf"/><rect x="389.28" y="426.9" width="14.8" height="3.60" fill="#f2a7b6"/><rect x="389.28" y="430.5" width="14.8" height="68.50" fill="#1e8cdc"/><rect x="389.28" y="430.30" width="14.8" height="1.2" fill="#3d78bf"/><rect x="410.88" y="425" width="14.8" height="3.40" fill="#f2a7b6"/><rect x="410.88" y="428.4" width="14.8" height="70.60" fill="#1e8cdc"/><rect x="410.88" y="428.20" width="14.8" height="1.2" fill="#3d78bf"/><rect x="432.48" y="425.6" width="14.8" height="3.30" fill="#f2a7b6"/><rect x="432.48" y="428.9" width="14.8" height="70.10" fill="#1e8cdc"/><rect x="432.48" y="428.70" width="14.8" height="1.2" fill="#3d78bf"/><rect x="454.07" y="426" width="14.8" height="3.50" fill="#f2a7b6"/><rect x="454.07" y="429.5" width="14.8" height="69.50" fill="#1e8cdc"/><rect x="454.07" y="429.30" width="14.8" height="1.2" fill="#3d78bf"/><rect x="475.67" y="424.5" width="14.8" height="3.50" fill="#f2a7b6"/><rect x="475.67" y="428" width="14.8" height="71.00" fill="#1e8cdc"/><rect x="475.67" y="427.80" width="14.8" height="1.2" fill="#3d78bf"/><rect x="497.27" y="423.7" width="14.8" height="3.70" fill="#f2a7b6"/><rect x="497.27" y="427.4" width="14.8" height="71.60" fill="#1e8cdc"/><rect x="497.27" y="427.20" width="14.8" height="1.2" fill="#3d78bf"/><rect x="518.87" y="425.5" width="14.8" height="4.00" fill="#f2a7b6"/><rect x="518.87" y="429.5" width="14.8" height="69.50" fill="#1e8cdc"/><rect x="518.87" y="429.30" width="14.8" height="1.2" fill="#3d78bf"/><rect x="540.47" y="426.2" width="14.8" height="3.80" fill="#f2a7b6"/><rect x="540.47" y="430" width="14.8" height="69.00" fill="#1e8cdc"/><rect x="540.47" y="429.80" width="14.8" height="1.2" fill="#3d78bf"/><rect x="562.06" y="424.8" width="14.8" height="3.90" fill="#f2a7b6"/><rect x="562.06" y="428.7" width="14.8" height="70.30" fill="#1e8cdc"/><rect x="562.06" y="428.50" width="14.8" height="1.2" fill="#3d78bf"/><rect x="583.66" y="425.9" width="14.8" height="4.10" fill="#f2a7b6"/><rect x="583.66" y="430" width="14.8" height="69.00" fill="#1e8cdc"/><rect x="583.66" y="429.80" width="14.8" height="1.2" fill="#3d78bf"/><rect x="605.26" y="424.2" width="14.8" height="3.80" fill="#f2a7b6"/><rect x="605.26" y="428" width="14.8" height="71.00" fill="#1e8cdc"/><rect x="605.26" y="427.80" width="14.8" height="1.2" fill="#3d78bf"/><rect x="626.86" y="426.1" width="14.8" height="3.90" fill="#f2a7b6"/><rect x="626.86" y="430" width="14.8" height="69.00" fill="#1e8cdc"/><rect x="626.86" y="429.80" width="14.8" height="1.2" fill="#3d78bf"/><rect x="648.46" y="425.8" width="14.8" height="4.20" fill="#f2a7b6"/><rect x="648.46" y="430" width="14.8" height="69.00" fill="#1e8cdc"/><rect x="648.46" y="429.80" width="14.8" height="1.2" fill="#3d78bf"/><rect x="670.05" y="424" width="14.8" height="4.00" fill="#f2a7b6"/><rect x="670.05" y="428" width="14.8" height="71.00" fill="#1e8cdc"/><rect x="670.05" y="427.80" width="14.8" height="1.2" fill="#3d78bf"/><rect x="691.65" y="425.8" width="14.8" height="4.20" fill="#f2a7b6"/><rect x="691.65" y="430" width="14.8" height="69.00" fill="#1e8cdc"/><rect x="691.65" y="429.80" width="14.8" height="1.2" fill="#3d78bf"/><rect x="713.25" y="425.2" width="14.8" height="3.80" fill="#f2a7b6"/><rect x="713.25" y="429" width="14.8" height="70.00" fill="#1e8cdc"/><rect x="713.25" y="428.80" width="14.8" height="1.2" fill="#3d78bf"/><rect x="734.85" y="424.5" width="14.8" height="4.20" fill="#f2a7b6"/><rect x="734.85" y="428.7" width="14.8" height="70.30" fill="#1e8cdc"/><rect x="734.85" y="428.50" width="14.8" height="1.2" fill="#3d78bf"/><rect x="756.44" y="438" width="14.8" height="3.60" fill="#f2a7b6"/><rect x="756.44" y="441.6" width="14.8" height="57.40" fill="#1e8cdc"/><rect x="756.44" y="441.40" width="14.8" height="1.2" fill="#3d78bf"/><rect x="778.04" y="425" width="14.8" height="4.00" fill="#f2a7b6"/><rect x="778.04" y="429" width="14.8" height="70.00" fill="#1e8cdc"/><rect x="778.04" y="428.80" width="14.8" height="1.2" fill="#3d78bf"/><rect x="799.64" y="425.8" width="14.8" height="4.20" fill="#f2a7b6"/><rect x="799.64" y="430" width="14.8" height="69.00" fill="#1e8cdc"/><rect x="799.64" y="429.80" width="14.8" height="1.2" fill="#3d78bf"/><clipPath id="plotclip"><rect x="191.5" y="377.0" width="1040.7" height="122.6"/></clipPath><g clip-path="url(#plotclip)"><line x1="197.5" y1="395.59" x2="1228.2" y2="394.40" stroke="#7a7a7a" stroke-width="1.1" stroke-dasharray="5.3 4.5"/><circle cx="202.00" cy="395.59" r="2.2" fill="#6a6a6a"/><circle cx="223.60" cy="395.56" r="2.2" fill="#6a6a6a"/><circle cx="245.19" cy="395.54" r="2.2" fill="#6a6a6a"/><circle cx="266.79" cy="395.51" r="2.2" fill="#6a6a6a"/><circle cx="288.39" cy="395.49" r="2.2" fill="#6a6a6a"/><circle cx="309.99" cy="395.46" r="2.2" fill="#6a6a6a"/><circle cx="331.59" cy="395.44" r="2.2" fill="#6a6a6a"/><circle cx="353.18" cy="395.41" r="2.2" fill="#6a6a6a"/><circle cx="374.78" cy="395.39" r="2.2" fill="#6a6a6a"/><circle cx="396.38" cy="395.36" r="2.2" fill="#6a6a6a"/><circle cx="417.98" cy="395.34" r="2.2" fill="#6a6a6a"/><circle cx="439.58" cy="395.31" r="2.2" fill="#6a6a6a"/><circle cx="461.17" cy="395.29" r="2.2" fill="#6a6a6a"/><circle cx="482.77" cy="395.26" r="2.2" fill="#6a6a6a"/><circle cx="504.37" cy="395.24" r="2.2" fill="#6a6a6a"/><circle cx="525.97" cy="395.21" r="2.2" fill="#6a6a6a"/><circle cx="547.57" cy="395.19" r="2.2" fill="#6a6a6a"/><circle cx="569.16" cy="395.16" r="2.2" fill="#6a6a6a"/><circle cx="590.76" cy="395.14" r="2.2" fill="#6a6a6a"/><circle cx="612.36" cy="395.11" r="2.2" fill="#6a6a6a"/><circle cx="633.96" cy="395.09" r="2.2" fill="#6a6a6a"/><circle cx="655.56" cy="395.06" r="2.2" fill="#6a6a6a"/><circle cx="677.15" cy="395.04" r="2.2" fill="#6a6a6a"/><circle cx="698.75" cy="395.01" r="2.2" fill="#6a6a6a"/><circle cx="720.35" cy="394.99" r="2.2" fill="#6a6a6a"/><circle cx="741.95" cy="394.96" r="2.2" fill="#6a6a6a"/><circle cx="763.54" cy="394.94" r="2.2" fill="#6a6a6a"/><circle cx="785.14" cy="394.91" r="2.2" fill="#6a6a6a"/><circle cx="806.74" cy="394.89" r="2.2" fill="#6a6a6a"/><circle cx="828.34" cy="394.86" r="2.2" fill="#6a6a6a"/><circle cx="849.94" cy="394.84" r="2.2" fill="#6a6a6a"/><circle cx="871.53" cy="394.81" r="2.2" fill="#6a6a6a"/><circle cx="893.13" cy="394.79" r="2.2" fill="#6a6a6a"/><circle cx="914.73" cy="394.76" r="2.2" fill="#6a6a6a"/><circle cx="936.33" cy="394.74" r="2.2" fill="#6a6a6a"/><circle cx="957.93" cy="394.71" r="2.2" fill="#6a6a6a"/><circle cx="979.52" cy="394.69" r="2.2" fill="#6a6a6a"/><circle cx="1001.12" cy="394.66" r="2.2" fill="#6a6a6a"/><circle cx="1022.72" cy="394.64" r="2.2" fill="#6a6a6a"/><circle cx="1044.32" cy="394.61" r="2.2" fill="#6a6a6a"/><circle cx="1065.92" cy="394.59" r="2.2" fill="#6a6a6a"/><circle cx="1087.51" cy="394.56" r="2.2" fill="#6a6a6a"/><circle cx="1109.11" cy="394.54" r="2.2" fill="#6a6a6a"/><circle cx="1130.71" cy="394.51" r="2.2" fill="#6a6a6a"/><circle cx="1152.31" cy="394.49" r="2.2" fill="#6a6a6a"/><circle cx="1173.91" cy="394.46" r="2.2" fill="#6a6a6a"/><circle cx="1195.50" cy="394.44" r="2.2" fill="#6a6a6a"/><circle cx="1217.10" cy="394.41" r="2.2" fill="#6a6a6a"/><polyline points="202.00,397.5 223.60,397.5 245.19,399.2 266.79,397.5 288.39,397.5 309.99,396.8 331.59,397.5 353.18,397.5 374.78,397.5 396.38,399.2 417.98,397.5 439.58,399.2 461.17,397.5 482.77,399.2 504.37,399.2 525.97,397.6 547.57,397.6 569.16,399.4 590.76,397.6 612.36,399.4 633.96,397.6 655.56,397.6 677.15,397.6 698.75,397.6 720.35,397.6 741.95,397 763.54,415 785.14,399 806.74,399 828.34,499 849.94,499 871.53,499 893.13,499 914.73,499 936.33,499 957.93,499 979.52,499 1001.12,499 1022.72,499 1044.32,499 1065.92,499 1087.51,499 1109.11,499 1130.71,499 1152.31,499 1173.91,499 1195.50,499 1217.10,499" fill="none" stroke="#1e95cc" stroke-width="1"/><polyline points="202.00,395.8 223.60,394.6 245.19,393.3 266.79,395.8 288.39,395.8 309.99,396.8 331.59,395.8 353.18,395.8 374.78,395.8 396.38,395.5 417.98,395.3 439.58,394.3 461.17,396.3 482.77,392.6 504.37,390.7 525.97,396.1 547.57,396.1 569.16,393.6 590.76,396.1 612.36,392.3 633.96,396.1 655.56,396.1 677.15,393.6 698.75,398.1 720.35,394.6 741.95,394.3 763.54,395.1 785.14,393.9 806.74,394.4 828.34,499 849.94,499 871.53,499 893.13,499 914.73,499 936.33,499 957.93,499 979.52,499 1001.12,499 1022.72,499 1044.32,499 1065.92,499 1087.51,499 1109.11,499 1130.71,499 1152.31,499 1173.91,499 1195.50,499 1217.10,499" fill="none" stroke="#4a4a4a" stroke-width="0.9"/><circle cx="202.00" cy="397.5" r="2.2" fill="#1793cb"/><circle cx="202.00" cy="395.8" r="2.3" fill="#525252"/><circle cx="223.60" cy="397.5" r="2.2" fill="#1793cb"/><circle cx="223.60" cy="394.6" r="2.3" fill="#525252"/><circle cx="245.19" cy="399.2" r="2.2" fill="#1793cb"/><circle cx="245.19" cy="393.3" r="2.3" fill="#525252"/><circle cx="266.79" cy="397.5" r="2.2" fill="#1793cb"/><circle cx="266.79" cy="395.8" r="2.3" fill="#525252"/><circle cx="288.39" cy="397.5" r="2.2" fill="#1793cb"/><circle cx="288.39" cy="395.8" r="2.3" fill="#525252"/><circle cx="309.99" cy="396.8" r="2.2" fill="#1793cb"/><circle cx="309.99" cy="396.8" r="2.3" fill="#525252"/><circle cx="331.59" cy="397.5" r="2.2" fill="#1793cb"/><circle cx="331.59" cy="395.8" r="2.3" fill="#525252"/><circle cx="353.18" cy="397.5" r="2.2" fill="#1793cb"/><circle cx="353.18" cy="395.8" r="2.3" fill="#525252"/><circle cx="374.78" cy="397.5" r="2.2" fill="#1793cb"/><circle cx="374.78" cy="395.8" r="2.3" fill="#525252"/><circle cx="396.38" cy="399.2" r="2.2" fill="#1793cb"/><circle cx="396.38" cy="395.5" r="2.3" fill="#525252"/><circle cx="417.98" cy="397.5" r="2.2" fill="#1793cb"/><circle cx="417.98" cy="395.3" r="2.3" fill="#525252"/><circle cx="439.58" cy="399.2" r="2.2" fill="#1793cb"/><circle cx="439.58" cy="394.3" r="2.3" fill="#525252"/><circle cx="461.17" cy="397.5" r="2.2" fill="#1793cb"/><circle cx="461.17" cy="396.3" r="2.3" fill="#525252"/><circle cx="482.77" cy="399.2" r="2.2" fill="#1793cb"/><circle cx="482.77" cy="392.6" r="2.3" fill="#525252"/><circle cx="504.37" cy="399.2" r="2.2" fill="#1793cb"/><circle cx="504.37" cy="390.7" r="2.3" fill="#525252"/><circle cx="525.97" cy="397.6" r="2.2" fill="#1793cb"/><circle cx="525.97" cy="396.1" r="2.3" fill="#525252"/><circle cx="547.57" cy="397.6" r="2.2" fill="#1793cb"/><circle cx="547.57" cy="396.1" r="2.3" fill="#525252"/><circle cx="569.16" cy="399.4" r="2.2" fill="#1793cb"/><circle cx="569.16" cy="393.6" r="2.3" fill="#525252"/><circle cx="590.76" cy="397.6" r="2.2" fill="#1793cb"/><circle cx="590.76" cy="396.1" r="2.3" fill="#525252"/><circle cx="612.36" cy="399.4" r="2.2" fill="#1793cb"/><circle cx="612.36" cy="392.3" r="2.3" fill="#525252"/><circle cx="633.96" cy="397.6" r="2.2" fill="#1793cb"/><circle cx="633.96" cy="396.1" r="2.3" fill="#525252"/><circle cx="655.56" cy="397.6" r="2.2" fill="#1793cb"/><circle cx="655.56" cy="396.1" r="2.3" fill="#525252"/><circle cx="677.15" cy="397.6" r="2.2" fill="#1793cb"/><circle cx="677.15" cy="393.6" r="2.3" fill="#525252"/><circle cx="698.75" cy="397.6" r="2.2" fill="#1793cb"/><circle cx="698.75" cy="398.1" r="2.3" fill="#525252"/><circle cx="720.35" cy="397.6" r="2.2" fill="#1793cb"/><circle cx="720.35" cy="394.6" r="2.3" fill="#525252"/><circle cx="741.95" cy="397" r="2.2" fill="#1793cb"/><circle cx="741.95" cy="394.3" r="2.3" fill="#525252"/><circle cx="763.54" cy="415" r="2.2" fill="#1793cb"/><circle cx="763.54" cy="395.1" r="2.3" fill="#525252"/><circle cx="785.14" cy="399" r="2.2" fill="#1793cb"/><circle cx="785.14" cy="393.9" r="2.3" fill="#525252"/><circle cx="806.74" cy="399" r="2.2" fill="#1793cb"/><circle cx="806.74" cy="394.4" r="2.3" fill="#525252"/><circle cx="828.34" cy="499" r="2.3" fill="#525252"/><circle cx="849.94" cy="499" r="2.3" fill="#525252"/><circle cx="871.53" cy="499" r="2.3" fill="#525252"/><circle cx="893.13" cy="499" r="2.3" fill="#525252"/><circle cx="914.73" cy="499" r="2.3" fill="#525252"/><circle cx="936.33" cy="499" r="2.3" fill="#525252"/><circle cx="957.93" cy="499" r="2.3" fill="#525252"/><circle cx="979.52" cy="499" r="2.3" fill="#525252"/><circle cx="1001.12" cy="499" r="2.3" fill="#525252"/><circle cx="1022.72" cy="499" r="2.3" fill="#525252"/><circle cx="1044.32" cy="499" r="2.3" fill="#525252"/><circle cx="1065.92" cy="499" r="2.3" fill="#525252"/><circle cx="1087.51" cy="499" r="2.3" fill="#525252"/><circle cx="1109.11" cy="499" r="2.3" fill="#525252"/><circle cx="1130.71" cy="499" r="2.3" fill="#525252"/><circle cx="1152.31" cy="499" r="2.3" fill="#525252"/><circle cx="1173.91" cy="499" r="2.3" fill="#525252"/><circle cx="1195.50" cy="499" r="2.3" fill="#525252"/><circle cx="1217.10" cy="499" r="2.3" fill="#525252"/></g><line x1="1228.2" y1="383.0" x2="1228.2" y2="538" stroke="#111" stroke-width="1.2"/></svg>
<div class="t" style="right:1143.8px;top:377.91px;font-size:9.6px;color:#2a2a2a;font-weight:normal;">1,500</div>
<div class="t" style="right:1143.8px;top:416.31px;font-size:9.6px;color:#2a2a2a;font-weight:normal;">1,000</div>
<div class="t" style="right:1143.8px;top:454.91px;font-size:9.6px;color:#2a2a2a;font-weight:normal;">500</div>
<div class="t" style="right:1143.8px;top:493.61px;font-size:9.6px;color:#2a2a2a;font-weight:normal;">0</div>
<div class="t" style="right:1126.2px;top:391.41px;font-size:9.6px;color:#2a2a2a;font-weight:normal;">15</div>
<div class="t" style="right:1126.2px;top:425.31px;font-size:9.6px;color:#2a2a2a;font-weight:normal;">10</div>
<div class="t" style="right:1126.2px;top:459.11px;font-size:9.6px;color:#2a2a2a;font-weight:normal;">5</div>
<div class="t" style="right:1126.2px;top:493.61px;font-size:9.6px;color:#2a2a2a;font-weight:normal;">0</div>
<div class="t" style="left:1232.5px;top:397.21px;font-size:9.6px;color:#2a2a2a;font-weight:normal;">60</div>
<div class="t" style="left:1232.5px;top:429.21px;font-size:9.6px;color:#2a2a2a;font-weight:normal;">40</div>
<div class="t" style="left:1232.5px;top:461.41px;font-size:9.6px;color:#2a2a2a;font-weight:normal;">20</div>
<div class="t" style="left:1232.5px;top:493.91px;font-size:9.6px;color:#2a2a2a;font-weight:normal;">0</div>
<div class="t" style="left:-308.5px;width:1000px;text-align:center;top:502.00px;font-size:9.5px;color:#222;font-weight:normal;">00:00</div>
<div class="t" style="left:-265.3041666666667px;width:1000px;text-align:center;top:502.00px;font-size:9.5px;color:#222;font-weight:normal;">01:00</div>
<div class="t" style="left:-222.10833333333335px;width:1000px;text-align:center;top:502.00px;font-size:9.5px;color:#222;font-weight:normal;">02:00</div>
<div class="t" style="left:-178.91250000000002px;width:1000px;text-align:center;top:502.00px;font-size:9.5px;color:#222;font-weight:normal;">03:00</div>
<div class="t" style="left:-135.7166666666667px;width:1000px;text-align:center;top:502.00px;font-size:9.5px;color:#222;font-weight:normal;">04:00</div>
<div class="t" style="left:-92.52083333333337px;width:1000px;text-align:center;top:502.00px;font-size:9.5px;color:#222;font-weight:normal;">05:00</div>
<div class="t" style="left:-49.32499999999999px;width:1000px;text-align:center;top:502.00px;font-size:9.5px;color:#222;font-weight:normal;">06:00</div>
<div class="t" style="left:-6.129166666666663px;width:1000px;text-align:center;top:502.00px;font-size:9.5px;color:#222;font-weight:normal;">07:00</div>
<div class="t" style="left:37.066666666666606px;width:1000px;text-align:center;top:502.00px;font-size:9.5px;color:#222;font-weight:normal;">08:00</div>
<div class="t" style="left:80.26250000000005px;width:1000px;text-align:center;top:502.00px;font-size:9.5px;color:#222;font-weight:normal;">09:00</div>
<div class="t" style="left:123.45833333333326px;width:1000px;text-align:center;top:502.00px;font-size:9.5px;color:#222;font-weight:normal;">10:00</div>
<div class="t" style="left:166.6541666666667px;width:1000px;text-align:center;top:502.00px;font-size:9.5px;color:#222;font-weight:normal;">11:00</div>
<div class="t" style="left:209.85000000000002px;width:1000px;text-align:center;top:502.00px;font-size:9.5px;color:#222;font-weight:normal;">12:00</div>
<div class="t" style="left:253.04583333333335px;width:1000px;text-align:center;top:502.00px;font-size:9.5px;color:#222;font-weight:normal;">13:00</div>
<div class="t" style="left:296.2416666666667px;width:1000px;text-align:center;top:502.00px;font-size:9.5px;color:#222;font-weight:normal;">14:00</div>
<div class="t" style="left:339.4375px;width:1000px;text-align:center;top:502.00px;font-size:9.5px;color:#222;font-weight:normal;">15:00</div>
<div class="t" style="left:382.6333333333333px;width:1000px;text-align:center;top:502.00px;font-size:9.5px;color:#222;font-weight:normal;">16:00</div>
<div class="t" style="left:425.82916666666665px;width:1000px;text-align:center;top:502.00px;font-size:9.5px;color:#222;font-weight:normal;">17:00</div>
<div class="t" style="left:469.025px;width:1000px;text-align:center;top:502.00px;font-size:9.5px;color:#222;font-weight:normal;">18:00</div>
<div class="t" style="left:512.2208333333333px;width:1000px;text-align:center;top:502.00px;font-size:9.5px;color:#222;font-weight:normal;">19:00</div>
<div class="t" style="left:555.4166666666665px;width:1000px;text-align:center;top:502.00px;font-size:9.5px;color:#222;font-weight:normal;">20:00</div>
<div class="t" style="left:598.6125px;width:1000px;text-align:center;top:502.00px;font-size:9.5px;color:#222;font-weight:normal;">21:00</div>
<div class="t" style="left:641.8083333333334px;width:1000px;text-align:center;top:502.00px;font-size:9.5px;color:#222;font-weight:normal;">22:00</div>
<div class="t" style="left:685.0041666666666px;width:1000px;text-align:center;top:502.00px;font-size:9.5px;color:#222;font-weight:normal;">23:00</div>
<div class="t" style="left:728.2px;width:1000px;text-align:center;top:502.00px;font-size:9.5px;color:#222;font-weight:normal;">00:00</div>
<div class="t" style="left:210px;width:1000px;text-align:center;top:521.37px;font-size:10.2px;color:#333;font-weight:normal;">2025-9-12</div>
<div class="t" style="left:134.4px;top:553.93px;font-size:10.8px;color:#333;font-weight:bold;font-weight:600;">Operational status</div>
<svg style="left:0;top:0" width="1314" height="690" viewBox="0 0 1314 690"><rect x="142.2" y="572.4" width="1104.7" height="27.6" fill="#efefef"/><line x1="142.2" y1="572.9" x2="1246.9" y2="572.9" stroke="#c9c9c9" stroke-width="1"/><line x1="188.23" y1="572.4" x2="188.23" y2="600" stroke="#dadada" stroke-width="1"/><line x1="234.26" y1="572.4" x2="234.26" y2="600" stroke="#dadada" stroke-width="1"/><line x1="280.29" y1="572.4" x2="280.29" y2="600" stroke="#c2c2c2" stroke-width="1"/><line x1="326.32" y1="572.4" x2="326.32" y2="600" stroke="#dadada" stroke-width="1"/><line x1="372.35" y1="572.4" x2="372.35" y2="600" stroke="#dadada" stroke-width="1"/><line x1="418.38" y1="572.4" x2="418.38" y2="600" stroke="#c2c2c2" stroke-width="1"/><line x1="464.40" y1="572.4" x2="464.40" y2="600" stroke="#dadada" stroke-width="1"/><line x1="510.43" y1="572.4" x2="510.43" y2="600" stroke="#dadada" stroke-width="1"/><line x1="556.46" y1="572.4" x2="556.46" y2="600" stroke="#c2c2c2" stroke-width="1"/><line x1="602.49" y1="572.4" x2="602.49" y2="600" stroke="#dadada" stroke-width="1"/><line x1="648.52" y1="572.4" x2="648.52" y2="600" stroke="#dadada" stroke-width="1"/><line x1="694.55" y1="572.4" x2="694.55" y2="600" stroke="#c2c2c2" stroke-width="1"/><line x1="740.58" y1="572.4" x2="740.58" y2="600" stroke="#dadada" stroke-width="1"/><line x1="786.61" y1="572.4" x2="786.61" y2="600" stroke="#dadada" stroke-width="1"/><line x1="832.64" y1="572.4" x2="832.64" y2="600" stroke="#c2c2c2" stroke-width="1"/><line x1="878.67" y1="572.4" x2="878.67" y2="600" stroke="#dadada" stroke-width="1"/><line x1="924.70" y1="572.4" x2="924.70" y2="600" stroke="#dadada" stroke-width="1"/><line x1="970.73" y1="572.4" x2="970.73" y2="600" stroke="#c2c2c2" stroke-width="1"/><line x1="1016.75" y1="572.4" x2="1016.75" y2="600" stroke="#dadada" stroke-width="1"/><line x1="1062.78" y1="572.4" x2="1062.78" y2="600" stroke="#dadada" stroke-width="1"/><line x1="1108.81" y1="572.4" x2="1108.81" y2="600" stroke="#c2c2c2" stroke-width="1"/><line x1="1154.84" y1="572.4" x2="1154.84" y2="600" stroke="#dadada" stroke-width="1"/><line x1="1200.87" y1="572.4" x2="1200.87" y2="600" stroke="#dadada" stroke-width="1"/><line x1="142.7" y1="572.4" x2="142.7" y2="600" stroke="#c9c9c9" stroke-width="1"/><rect x="142.2" y="576.2" width="82.00" height="19.8" fill="#92d050"/><rect x="224.2" y="576.2" width="16.00" height="19.8" fill="#ff0000"/><rect x="240.2" y="576.2" width="36.70" height="19.8" fill="#92d050"/><rect x="276.9" y="576.2" width="9.40" height="19.8" fill="#ff0000"/><rect x="286.3" y="576.2" width="36.50" height="19.8" fill="#92d050"/><rect x="322.8" y="576.2" width="13.80" height="19.8" fill="#ff0000"/><rect x="336.6" y="576.2" width="2.40" height="19.8" fill="#ffff00"/><rect x="339" y="576.2" width="12.00" height="19.8" fill="#ff0000"/><rect x="351" y="576.2" width="144.00" height="19.8" fill="#92d050"/><rect x="495" y="576.2" width="3.00" height="19.8" fill="#ffff00"/><rect x="498" y="576.2" width="7.00" height="19.8" fill="#ff0000"/><rect x="505" y="576.2" width="5.00" height="19.8" fill="#ffff00"/><rect x="510" y="576.2" width="35.50" height="19.8" fill="#92d050"/><rect x="545.5" y="576.2" width="2.50" height="19.8" fill="#ffff00"/><rect x="548" y="576.2" width="36.50" height="19.8" fill="#92d050"/><rect x="584.5" y="576.2" width="6.50" height="19.8" fill="#ff0000"/><rect x="591" y="576.2" width="3.30" height="19.8" fill="#ffff00"/><rect x="594.3" y="576.2" width="9.00" height="19.8" fill="#ff0000"/><rect x="603.3" y="576.2" width="72.50" height="19.8" fill="#92d050"/><rect x="675.8" y="576.2" width="18.80" height="19.8" fill="#ff0000"/><rect x="694.6" y="576.2" width="2.90" height="19.8" fill="#ffff00"/><rect x="697.5" y="576.2" width="35.50" height="19.8" fill="#92d050"/><rect x="733" y="576.2" width="3.00" height="19.8" fill="#ffff00"/><rect x="736" y="576.2" width="72.40" height="19.8" fill="#92d050"/><rect x="808.4" y="576.2" width="4.90" height="19.8" fill="#ff0000"/><rect x="278.7" y="576.2" width="1" height="19.8" fill="#b00000"/><rect x="343.3" y="576.2" width="1" height="19.8" fill="#c80000"/><rect x="598.4" y="576.2" width="1" height="19.8" fill="#c80000"/><rect x="688.9" y="576.2" width="1" height="19.8" fill="#ff7a7a"/><rect x="754.5" y="576.2" width="1" height="19.8" fill="#74a23f"/></svg>
<div class="t" style="left:149.4px;top:602.79px;font-size:9.84px;color:#333;font-weight:normal;">Sep 12</div>
<div class="t" style="left:290.9875px;top:602.92px;font-size:9.7px;color:#333;font-weight:normal;">03:00</div>
<div class="t" style="left:429.075px;top:602.92px;font-size:9.7px;color:#333;font-weight:normal;">06:00</div>
<div class="t" style="left:567.1625000000001px;top:602.92px;font-size:9.7px;color:#333;font-weight:normal;">09:00</div>
<div class="t" style="left:705.25px;top:602.92px;font-size:9.7px;color:#333;font-weight:normal;">12:00</div>
<div class="t" style="left:843.3375000000001px;top:602.92px;font-size:9.7px;color:#333;font-weight:normal;">15:00</div>
<div class="t" style="left:981.4250000000002px;top:602.92px;font-size:9.7px;color:#333;font-weight:normal;">18:00</div>
<div class="t" style="left:1119.5125px;top:602.92px;font-size:9.7px;color:#333;font-weight:normal;">21:00</div>
</body></html>
